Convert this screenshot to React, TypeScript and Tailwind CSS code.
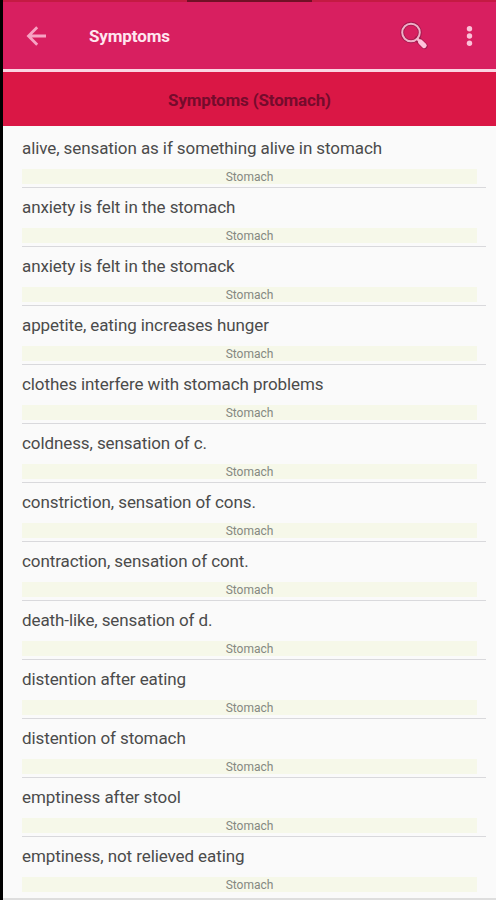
const symptoms = [
  "alive, sensation as if something alive in stomach",
  "anxiety is felt in the stomach",
  "anxiety is felt in the stomack",
  "appetite, eating increases hunger",
  "clothes interfere with stomach problems",
  "coldness, sensation of c.",
  "constriction, sensation of cons.",
  "contraction, sensation of cont.",
  "death-like, sensation of d.",
  "distention after eating",
  "distention of stomach",
  "emptiness after stool",
  "emptiness, not relieved eating",
];

function Toolbar() {
  return (
    <header className="flex h-[67px] shrink-0 items-center bg-[#d81f60] pl-[23px] pr-[23px]">
      <button type="button" aria-label="Back">
        <svg className="block h-[20px] w-[21px]" viewBox="0 0 21 20" fill="none" stroke="#f7a3c3" strokeWidth="2.8">
          <path d="M20 10H2.5M11.2 1.3L2.5 10L11.2 18.7" />
        </svg>
      </button>
      <h1 className="ml-[42px] pt-px text-[17px] leading-6 font-bold tracking-[-0.13px] text-[#ffe6ef]">Symptoms</h1>
      <div className="ml-auto flex items-center">
        <button type="button" aria-label="Search">
          <svg className="block h-[30px] w-[30px]" viewBox="0 0 30 30" fill="none" strokeLinecap="round">
            <circle cx="12" cy="11.5" r="8.8" stroke="#a3184d" strokeWidth="3.8" />
            <path d="M18.5 18L25.5 25" stroke="#a3184d" strokeWidth="6.2" />
            <circle cx="12" cy="11.5" r="8.8" stroke="#eeb0c7" strokeWidth="2" />
            <path d="M18.5 18L20 19.5" stroke="#f6b8d0" strokeWidth="2.5" />
            <path d="M21.5 21L25.2 24.6" stroke="#ffc2da" strokeWidth="5" />
          </svg>
        </button>
        <button type="button" aria-label="More options" className="ml-[36px]">
          <svg className="block h-[22px] w-[8px]" viewBox="0 0 8 22" fill="#fbc1d8">
            <circle cx="4.5" cy="3.8" r="2.7" />
            <circle cx="4.5" cy="11" r="2.7" />
            <circle cx="4.5" cy="18.2" r="2.7" />
          </svg>
        </button>
      </div>
    </header>
  );
}

function SymptomRow({ name, last }: { name: string; last: boolean }) {
  return (
    <li className="h-[59px]">
      <p className="h-[40px] pt-[7px] text-[17px] leading-6 tracking-[-0.09px] text-[#4b4b4b]">{name}</p>
      <p className="mr-[9px] h-[15px] bg-[#f6f8e9] text-center text-[12px] leading-[16px] text-[#858881]">Stomach</p>
      {!last && <div className="mt-[3px] h-px bg-[#d9d9dc]" />}
    </li>
  );
}

export default function App() {
  return (
    <div className="flex h-[900px] w-[496px] flex-col overflow-hidden border-l-[3px] border-black bg-[#fafafa] font-['Roboto',sans-serif]">
      <div className="h-[2px] shrink-0 bg-[#c41a43] pl-[184px]">
        <div className="h-full w-[125px] bg-[#701026]" />
      </div>
      <Toolbar />
      <div className="h-[3px] shrink-0 bg-[#fbd5e2]" />
      <h2 className="h-[54px] shrink-0 bg-[#da1745] text-center text-[17px] leading-[56px] font-bold tracking-[-0.17px] text-[#750b2c]">
        Symptoms (Stomach)
      </h2>
      <ul className="h-[774px] shrink-0 border-b-2 border-[#dedede] pt-[3px] pl-[19px] pr-[10px]">
        {symptoms.map((name, i) => (
          <SymptomRow key={name} name={name} last={i === symptoms.length - 1} />
        ))}
      </ul>
    </div>
  );
}
